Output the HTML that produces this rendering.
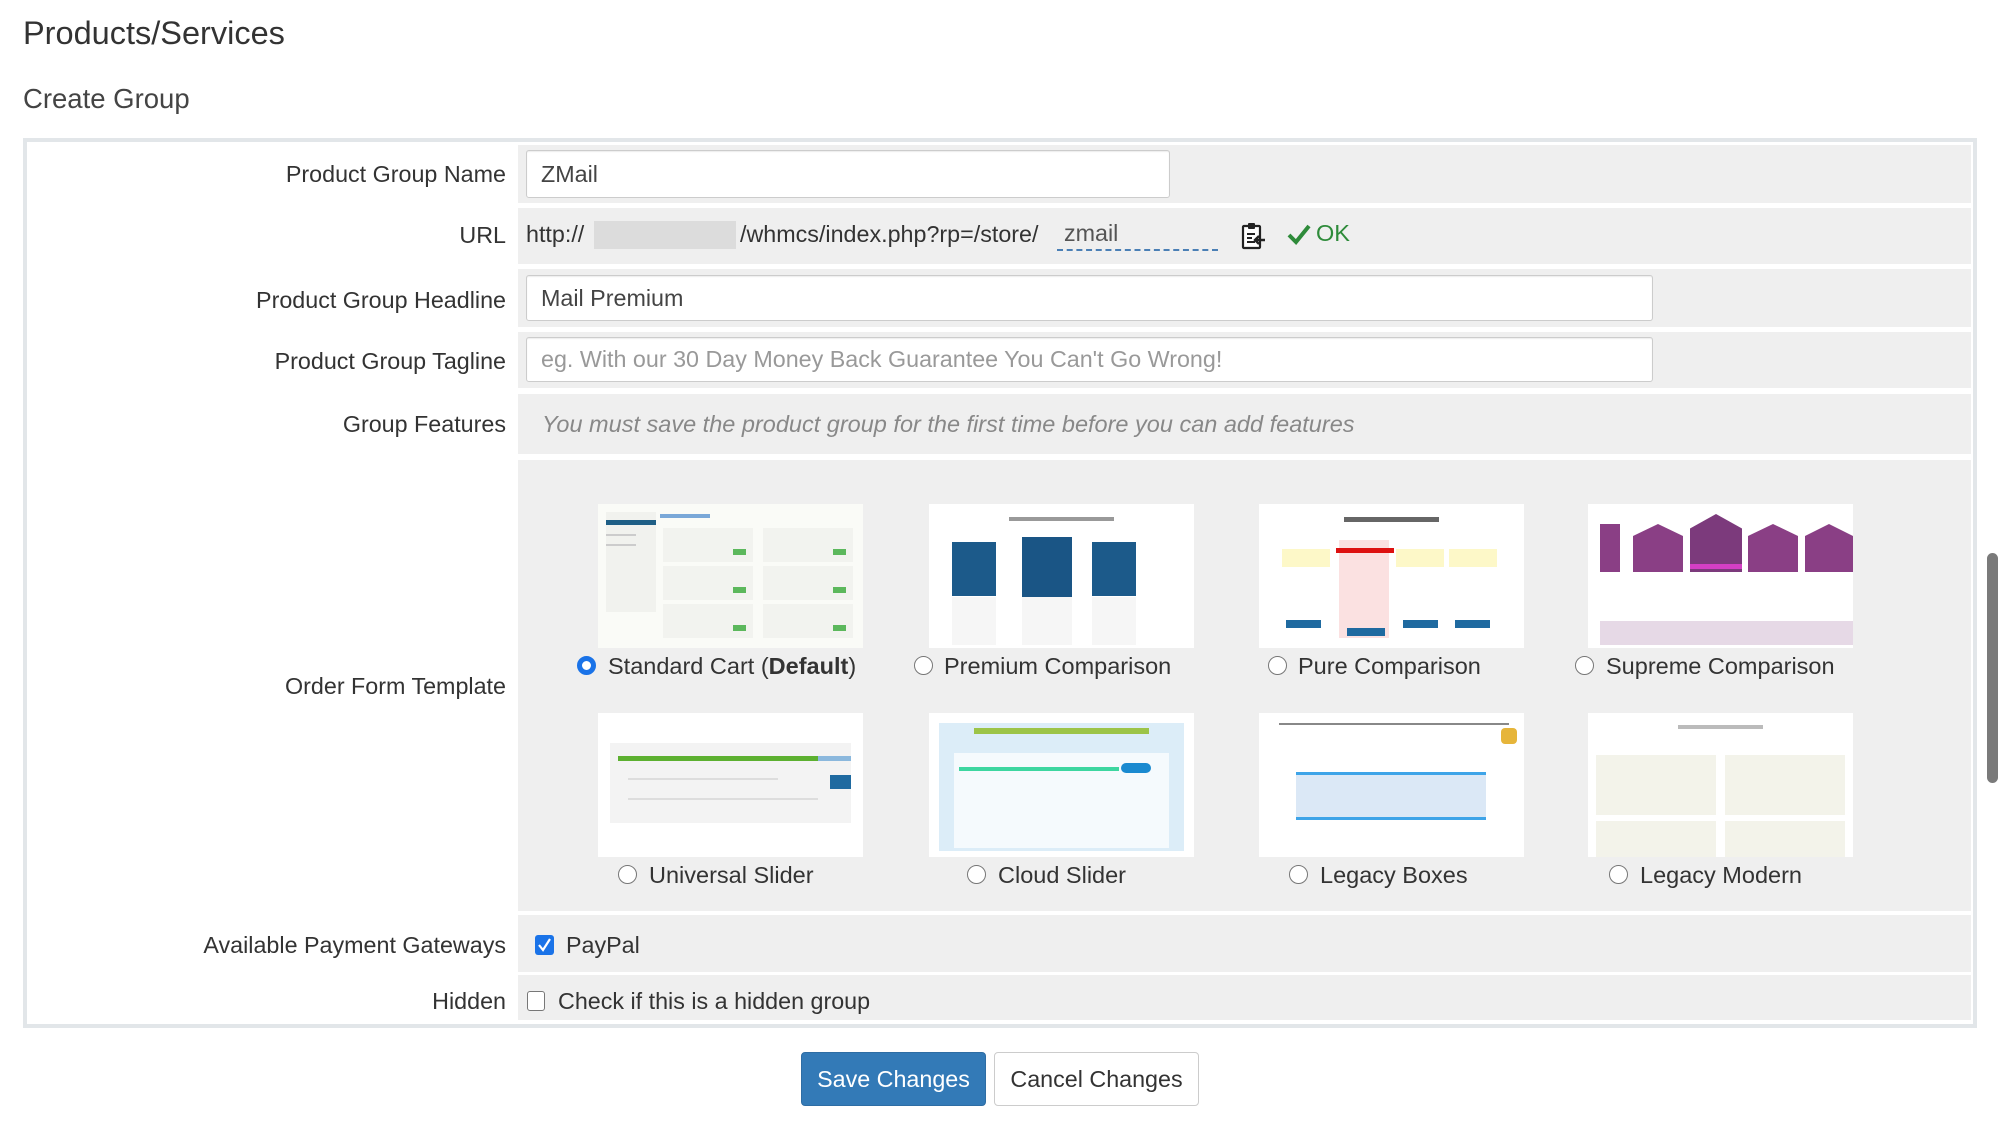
<!DOCTYPE html>
<html><head><meta charset="utf-8">
<style>
*{box-sizing:border-box;margin:0;padding:0}
body{width:2000px;height:1137px;background:#fff;font-family:"Liberation Sans",sans-serif;color:#333;position:relative;overflow:hidden}
.a{position:absolute}
h1{position:absolute;left:23px;top:15px;font-size:32.5px;font-weight:normal;color:#333}
h2{position:absolute;left:23px;top:83px;font-size:27.5px;font-weight:normal;color:#444}
.panel{left:23px;top:138px;width:1954px;height:890px;border:4px solid #e2e6e9;background:#fff}
.row{position:absolute;left:518px;width:1453px;background:#efefef}
.lbl{position:absolute;right:1494px;font-size:23.3px;color:#333;white-space:nowrap;text-align:right}
.inp{position:absolute;background:#fff;border:1px solid #ccc;border-radius:3px;font-size:23.3px;padding-left:14px;display:flex;align-items:center;color:#444;box-shadow:inset 0 1px 1px rgba(0,0,0,.08)}
.th{position:absolute;width:265px;height:144px;background:#fff;overflow:hidden}
.rad{position:absolute;width:19px;height:19px;border:1.5px solid #777;border-radius:50%;background:#fff}
.rt{position:absolute;font-size:23.5px;color:#333;white-space:nowrap}
.ln{position:absolute;height:3px;background:#ddd}
.btn{position:absolute;height:54px;font-size:23.3px;display:flex;align-items:center;justify-content:center;border-radius:4px}
</style></head><body>
<h1>Products/Services</h1>
<h2>Create Group</h2>
<div class="a panel"></div>

<div class="row" style="top:145px;height:58px"></div>
<div class="lbl" style="top:161px">Product Group Name</div>
<div class="inp" style="left:526px;top:150px;width:644px;height:48px">ZMail</div>

<div class="row" style="top:208px;height:56px"></div>
<div class="lbl" style="top:222px">URL</div>
<div class="a" style="left:526px;top:221px;font-size:23.3px;color:#333">http://</div>
<div class="a" style="left:594px;top:221px;width:142px;height:28px;background:#dcdcdc"></div>
<div class="a" style="left:740px;top:221px;font-size:23.3px;color:#333">/whmcs/index.php?rp=/store/</div>
<div class="a" style="left:1057px;top:220px;width:161px;height:31px;border-bottom:2px dashed #4a7fb5;font-size:23.3px;color:#555;padding-left:7px">zmail</div>
<svg class="a" style="left:1240px;top:222px" width="26" height="28" viewBox="0 0 26 28"><rect x="3" y="4" width="17" height="22" rx="1" fill="#fff" stroke="#222" stroke-width="2.2"/><rect x="8" y="1" width="7" height="6" rx="1" fill="#222"/><path d="M7 12h8M7 16h5M7 20h8" stroke="#222" stroke-width="2"/><path d="M25 18h-9m3-4l-4 4 4 4" stroke="#222" stroke-width="2.4" fill="none"/></svg>
<svg class="a" style="left:1287px;top:223px" width="24" height="22" viewBox="0 0 24 22"><path d="M2 12l7 7L22 3" stroke="#2e8b3a" stroke-width="4" fill="none"/></svg>
<div class="a" style="left:1316px;top:220px;font-size:23.5px;color:#2e8b3a">OK</div>

<div class="row" style="top:269px;height:58px"></div>
<div class="lbl" style="top:287px">Product Group Headline</div>
<div class="inp" style="left:526px;top:275px;width:1127px;height:46px">Mail Premium</div>

<div class="row" style="top:332px;height:56px"></div>
<div class="lbl" style="top:348px">Product Group Tagline</div>
<div class="inp" style="left:526px;top:337px;width:1127px;height:45px;color:#999">eg. With our 30 Day Money Back Guarantee You Can't Go Wrong!</div>

<div class="row" style="top:394px;height:60px"></div>
<div class="lbl" style="top:411px">Group Features</div>
<div class="a" style="left:542px;top:411px;font-size:23.5px;font-style:italic;color:#888">You must save the product group for the first time before you can add features</div>

<div class="row" style="top:460px;height:451px"></div>
<div class="lbl" style="top:673px">Order Form Template</div>

<div class="th" style="left:598px;top:504px;background:#fafbf7">
 <div class="a" style="left:8px;top:8px;width:50px;height:100px;background:#f1f2ee"></div>
 <div class="a" style="left:8px;top:16px;width:50px;height:5px;background:#1f5f86"></div>
 <div class="a" style="left:8px;top:30px;width:30px;height:2px;background:#ccc"></div>
 <div class="a" style="left:8px;top:40px;width:30px;height:2px;background:#ccc"></div>
 <div class="a" style="left:62px;top:10px;width:50px;height:4px;background:#7aa8d8"></div>
 <div class="a" style="left:65px;top:24px;width:90px;height:34px;background:#f2f3ef"></div>
 <div class="a" style="left:165px;top:24px;width:90px;height:34px;background:#f2f3ef"></div>
 <div class="a" style="left:65px;top:62px;width:90px;height:34px;background:#f2f3ef"></div>
 <div class="a" style="left:165px;top:62px;width:90px;height:34px;background:#f2f3ef"></div>
 <div class="a" style="left:65px;top:100px;width:90px;height:34px;background:#f2f3ef"></div>
 <div class="a" style="left:165px;top:100px;width:90px;height:34px;background:#f2f3ef"></div>
 <div class="a" style="left:135px;top:45px;width:13px;height:6px;background:#5cb85c"></div>
 <div class="a" style="left:235px;top:45px;width:13px;height:6px;background:#5cb85c"></div>
 <div class="a" style="left:135px;top:83px;width:13px;height:6px;background:#5cb85c"></div>
 <div class="a" style="left:235px;top:83px;width:13px;height:6px;background:#5cb85c"></div>
 <div class="a" style="left:135px;top:121px;width:13px;height:6px;background:#5cb85c"></div>
 <div class="a" style="left:235px;top:121px;width:13px;height:6px;background:#5cb85c"></div>
</div>
<div class="th" style="left:929px;top:504px">
 <div class="a" style="left:80px;top:13px;width:105px;height:4px;background:#999"></div>
 <div class="a" style="left:23px;top:38px;width:44px;height:54px;background:#1c5a8a"></div>
 <div class="a" style="left:93px;top:33px;width:50px;height:60px;background:#1a5585"></div>
 <div class="a" style="left:163px;top:38px;width:44px;height:54px;background:#1c5a8a"></div>
 <div class="a" style="left:23px;top:93px;width:44px;height:48px;background:#f6f6f6"></div>
 <div class="a" style="left:93px;top:93px;width:50px;height:48px;background:#f6f6f6"></div>
 <div class="a" style="left:163px;top:93px;width:44px;height:48px;background:#f6f6f6"></div>
</div>
<div class="th" style="left:1259px;top:504px">
 <div class="a" style="left:85px;top:13px;width:95px;height:5px;background:#666"></div>
 <div class="a" style="left:23px;top:45px;width:48px;height:18px;background:#fdf8c8"></div>
 <div class="a" style="left:80px;top:36px;width:50px;height:98px;background:#fbe1e1"></div>
 <div class="a" style="left:77px;top:44px;width:58px;height:5px;background:#d11"></div>
 <div class="a" style="left:137px;top:45px;width:48px;height:18px;background:#fdf8c8"></div>
 <div class="a" style="left:190px;top:45px;width:48px;height:18px;background:#fdf8c8"></div>
 <div class="a" style="left:27px;top:116px;width:35px;height:8px;background:#1f6aa0"></div>
 <div class="a" style="left:88px;top:124px;width:38px;height:8px;background:#1f6aa0"></div>
 <div class="a" style="left:144px;top:116px;width:35px;height:8px;background:#1f6aa0"></div>
 <div class="a" style="left:196px;top:116px;width:35px;height:8px;background:#1f6aa0"></div>
</div>
<div class="th" style="left:1588px;top:504px">
 <div class="a" style="left:12px;top:20px;width:20px;height:48px;background:#8a3f85"></div>
 <div class="a" style="left:45px;top:20px;width:50px;height:48px;background:#8a3f85;clip-path:polygon(0 25%,50% 0,100% 25%,100% 100%,0 100%)"></div>
 <div class="a" style="left:102px;top:10px;width:52px;height:58px;background:#7c3a7c;clip-path:polygon(0 25%,50% 0,100% 25%,100% 100%,0 100%)"></div>
 <div class="a" style="left:102px;top:60px;width:52px;height:5px;background:#d43fc4"></div>
 <div class="a" style="left:160px;top:20px;width:50px;height:48px;background:#8a3f85;clip-path:polygon(0 25%,50% 0,100% 25%,100% 100%,0 100%)"></div>
 <div class="a" style="left:217px;top:20px;width:48px;height:48px;background:#8a3f85;clip-path:polygon(0 25%,50% 0,100% 25%,100% 100%,0 100%)"></div>
 <div class="a" style="left:12px;top:117px;width:253px;height:24px;background:#e6d9e6"></div>
</div>
<div class="rad" style="left:577px;top:656px;border:5px solid #1a73e8"></div>
<div class="rt" style="left:608px;top:653px">Standard Cart (<b>Default</b>)</div>
<div class="rad" style="left:914px;top:656px"></div>
<div class="rt" style="left:944px;top:653px">Premium Comparison</div>
<div class="rad" style="left:1268px;top:656px"></div>
<div class="rt" style="left:1298px;top:653px">Pure Comparison</div>
<div class="rad" style="left:1575px;top:656px"></div>
<div class="rt" style="left:1606px;top:653px">Supreme Comparison</div>

<div class="th" style="left:598px;top:713px">
 <div class="a" style="left:12px;top:30px;width:241px;height:80px;background:#f3f3f3"></div>
 <div class="a" style="left:20px;top:43px;width:200px;height:5px;background:#5cb030"></div>
 <div class="a" style="left:220px;top:43px;width:33px;height:5px;background:#8bb8dd"></div>
 <div class="a" style="left:232px;top:62px;width:21px;height:14px;background:#1f6aa0"></div>
 <div class="ln" style="left:30px;top:65px;width:150px;height:2px"></div>
 <div class="ln" style="left:30px;top:85px;width:190px;height:2px"></div>
</div>
<div class="th" style="left:929px;top:713px">
 <div class="a" style="left:10px;top:10px;width:245px;height:128px;background:#dcedf8"></div>
 <div class="a" style="left:45px;top:15px;width:175px;height:6px;background:#9cc448"></div>
 <div class="a" style="left:25px;top:40px;width:215px;height:95px;background:#f5fafd"></div>
 <div class="a" style="left:30px;top:54px;width:160px;height:4px;background:#3dd6a0"></div>
 <div class="a" style="left:192px;top:50px;width:30px;height:10px;background:#1a8ad0;border-radius:5px"></div>
</div>
<div class="th" style="left:1259px;top:713px">
 <div class="a" style="left:20px;top:10px;width:230px;height:2px;background:#888"></div>
 <div class="a" style="left:242px;top:15px;width:16px;height:16px;background:#e6b53a;border-radius:4px"></div>
 <div class="a" style="left:37px;top:60px;width:190px;height:45px;background:#dbe8f6"></div>
 <div class="a" style="left:37px;top:59px;width:190px;height:3px;background:#3ea4e8"></div>
 <div class="a" style="left:37px;top:104px;width:190px;height:3px;background:#3ea4e8"></div>
</div>
<div class="th" style="left:1588px;top:713px">
 <div class="a" style="left:90px;top:12px;width:85px;height:4px;background:#bbb"></div>
 <div class="a" style="left:8px;top:42px;width:120px;height:60px;background:#f3f3ea"></div>
 <div class="a" style="left:137px;top:42px;width:120px;height:60px;background:#f3f3ea"></div>
 <div class="a" style="left:8px;top:108px;width:120px;height:36px;background:#f3f3ea"></div>
 <div class="a" style="left:137px;top:108px;width:120px;height:36px;background:#f3f3ea"></div>
</div>
<div class="rad" style="left:618px;top:865px"></div>
<div class="rt" style="left:649px;top:862px">Universal Slider</div>
<div class="rad" style="left:967px;top:865px"></div>
<div class="rt" style="left:998px;top:862px">Cloud Slider</div>
<div class="rad" style="left:1289px;top:865px"></div>
<div class="rt" style="left:1320px;top:862px">Legacy Boxes</div>
<div class="rad" style="left:1609px;top:865px"></div>
<div class="rt" style="left:1640px;top:862px">Legacy Modern</div>

<div class="row" style="top:915px;height:57px"></div>
<div class="lbl" style="top:932px">Available Payment Gateways</div>
<div class="a" style="left:535px;top:935px;width:19px;height:20px;background:#1a73e8;border-radius:3px"></div>
<svg class="a" style="left:537px;top:937px" width="15" height="16" viewBox="0 0 15 16"><path d="M2 8l4 5 7-11" stroke="#fff" stroke-width="2.2" fill="none"/></svg>
<div class="a" style="left:566px;top:932px;font-size:23.3px">PayPal</div>

<div class="row" style="top:975px;height:45px"></div>
<div class="lbl" style="top:988px">Hidden</div>
<div class="a" style="left:527px;top:991px;width:18px;height:20px;border:1.5px solid #777;border-radius:3px;background:#fff"></div>
<div class="a" style="left:558px;top:988px;font-size:23.3px">Check if this is a hidden group</div>

<div class="btn" style="left:801px;top:1052px;width:185px;background:#337ab7;border:1px solid #2e6da4;color:#fff">Save Changes</div>
<div class="btn" style="left:994px;top:1052px;width:205px;background:#fff;border:1px solid #ccc;color:#333">Cancel Changes</div>

<div class="a" style="left:1987px;top:553px;width:11px;height:230px;background:#7a7a7a;border-radius:6px"></div>
</body></html>
